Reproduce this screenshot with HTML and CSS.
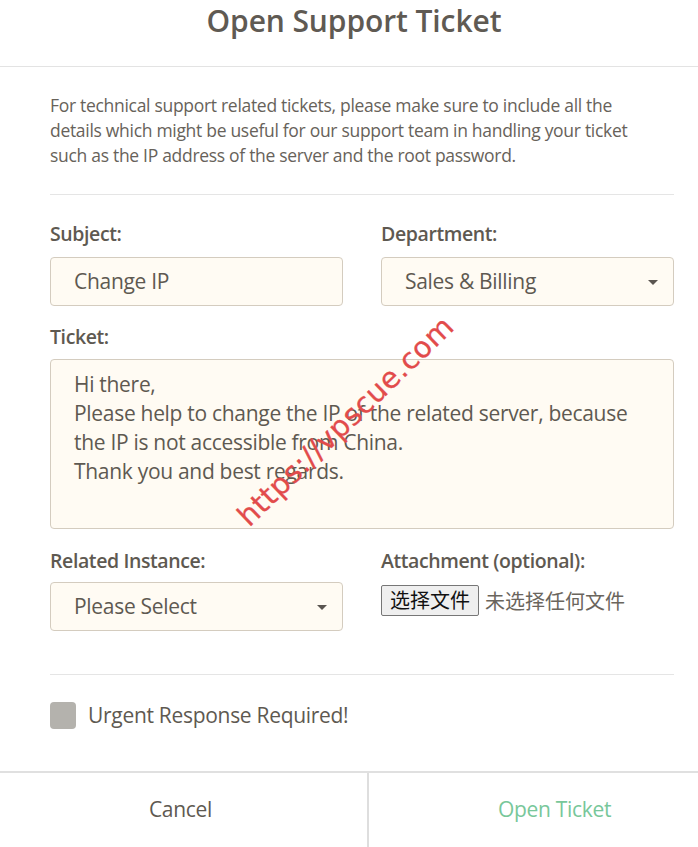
FILE: index.html
```html
<!DOCTYPE html>
<html lang="en">
<head>
<meta charset="utf-8">
<title>Open Support Ticket</title>
<link rel="stylesheet" href="styles.css">
</head>
<body>
<div class="modal">
  <div class="modal-header">
    <h1 class="title">Open Support Ticket</h1>
  </div>
  <div class="modal-body">
    <p class="intro">For technical support related tickets, please make sure to include all the details which might be useful for our support team in handling your ticket such as the IP address of the server and the root password.</p>
    <hr class="divider">
    <div class="row">
      <div class="field">
        <label class="label">Subject:</label>
        <div class="control">Change IP</div>
      </div>
      <div class="field">
        <label class="label">Department:</label>
        <div class="control select">Sales &amp; Billing<span class="caret"></span></div>
      </div>
    </div>
    <div class="field full">
      <label class="label">Ticket:</label>
      <div class="control textarea">Hi there,<br>Please help to change the IP of the related server, because the IP is not accessible from China.<br>Thank you and best regards.</div>
    </div>
    <div class="row row-bottom">
      <div class="field">
        <label class="label">Related Instance:</label>
        <div class="control select">Please Select<span class="caret"></span></div>
      </div>
      <div class="field">
        <label class="label">Attachment (optional):</label>
        <div class="file">
          <span class="file-btn">选择文件</span>
          <span class="file-name">未选择任何文件</span>
        </div>
      </div>
    </div>
    <hr class="divider divider-low">
    <div class="check-row">
      <span class="checkbox"></span>
      <span class="check-label">Urgent Response Required!</span>
    </div>
  </div>
  <div class="modal-footer">
    <div class="btn btn-cancel">Cancel</div>
    <div class="btn btn-open">Open Ticket</div>
  </div>
  <div class="watermark">https://vpscue.com</div>
</div>
</body>
</html>
```
FILE: styles.css
```css
* { box-sizing: border-box; }
html, body { margin: 0; padding: 0; background: #fff; }
body {
  font-family: "Open Sans", "Noto Sans", sans-serif;
  color: #5e5951;
  width: 698px;
  height: 847px;
  overflow: hidden;
}
.modal {
  position: relative;
  width: 698px;
  height: 847px;
  overflow: hidden;
}
.modal-header {
  height: 67px;
  border-bottom: 1px solid #e3e3e3;
  display: flex;
  justify-content: center;
}
.title {
  margin: 0 0 0 10px;
  font-size: 30px;
  line-height: 41px;
  font-weight: 600;
  color: #5f5a53;
  letter-spacing: -0.1px;
}
.modal-body {
  padding: 26px 24px 0 50px;
  height: 704px;
}
.intro {
  margin: 0;
  max-width: 606px;
  font-size: 17.5px;
  line-height: 25px;
  color: #67625a;
  letter-spacing: -0.3px;
}
.divider {
  border: 0;
  border-top: 1px solid #e5e5e5;
  margin: 26px 0 0;
}
.row {
  display: flex;
  gap: 38px;
  margin-top: 25px;
}
.row .field { flex: 1; }
.row-bottom { margin-top: 18px; }
.label {
  display: block;
  font-size: 19.5px;
  font-weight: 600;
  line-height: 28px;
  color: #5e5951;
  letter-spacing: -0.4px;
  margin-bottom: 9px;
}
.row-bottom .label { margin-bottom: 7px; }
.field.full { margin-top: 17px; }
.field.full .label { margin-bottom: 8px; }
.control {
  position: relative;
  height: 49px;
  border: 1px solid #d4ccbf;
  border-radius: 4px;
  background: #fffbf3;
  padding: 0 23px;
  font-size: 21px;
  line-height: 46px;
  color: #5e5951;
  letter-spacing: -0.3px;
}
.caret {
  position: absolute;
  right: 15px;
  top: 22px;
  width: 0;
  height: 0;
  border-left: 5px solid transparent;
  border-right: 5px solid transparent;
  border-top: 5px solid #5a5550;
}
.textarea {
  height: 170px;
  padding: 10px 36px 0 23px;
  line-height: 29px;
}
.file {
  display: flex;
  align-items: center;
  gap: 6px;
  margin-top: 10px;
  font-family: "Noto Sans CJK SC", sans-serif;
}
.file-btn {
  height: 31px;
  padding: 0 8px;
  border: 1px solid #767676;
  border-radius: 2px;
  background: #efefef;
  color: #111;
  font-size: 20px;
  line-height: 28px;
}
.file-name {
  font-size: 20px;
  color: #6a655d;
}
.divider-low { margin-top: 43px; }
.check-row {
  display: flex;
  align-items: center;
  gap: 12px;
  margin-top: 26px;
}
.checkbox {
  width: 26px;
  height: 27px;
  border-radius: 4px;
  background: #b4b2ad;
}
.check-label {
  font-size: 21px;
  color: #5e5951;
  letter-spacing: -0.3px;
}
.modal-footer {
  display: flex;
  border-top: 2px solid #e0e0e0;
  height: 76px;
}
.btn {
  display: flex;
  align-items: center;
  justify-content: center;
  font-size: 21px;
  letter-spacing: -0.3px;
  padding-bottom: 2px;
}
.btn-cancel {
  width: 369px;
  flex: none;
  color: #5e5951;
  border-right: 2px solid #dedede;
  padding-right: 6px;
}
.btn-open {
  width: 371px;
  flex: none;
  color: #78c79a;
}
.watermark {
  position: absolute;
  left: 202px;
  top: 404px;
  transform: rotate(-44deg);
  font-family: "DejaVu Sans", sans-serif;
  font-size: 29px;
  color: #e24b4b;
  letter-spacing: 0.5px;
  white-space: nowrap;
  -webkit-text-stroke: 0.3px #e24b4b;
}
```
